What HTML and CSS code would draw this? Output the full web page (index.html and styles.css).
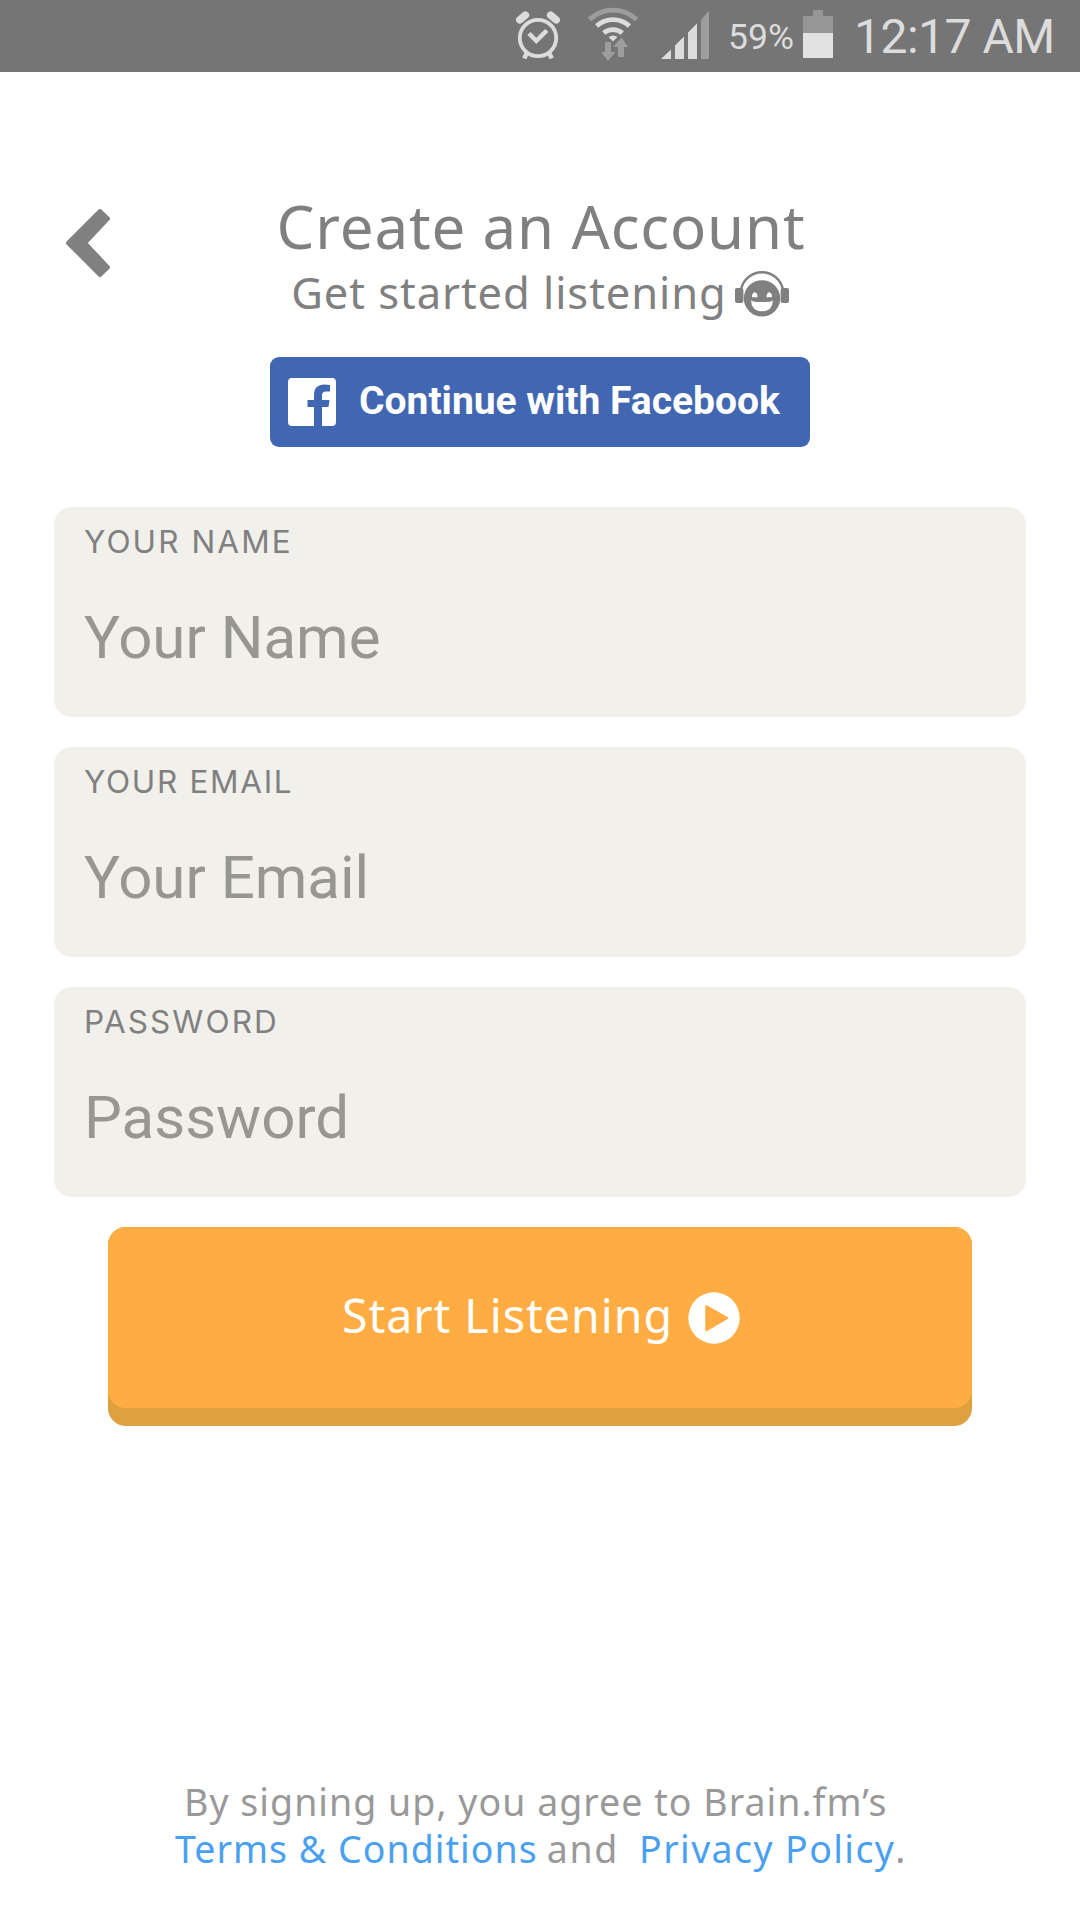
FILE: index.html
```html
<!DOCTYPE html>
<html lang="en">
<head>
<meta charset="utf-8">
<title>Create an Account</title>
<link rel="stylesheet" href="styles.css">
</head>
<body>
<div class="status">
  <svg class="alarm" viewBox="0 0 44 48" width="44" height="48" fill="none" stroke="#dcdcdc">
    <circle cx="22" cy="27" r="18.2" stroke-width="3.8"/>
    <path d="M13 22.500 20.300 29.800 30.800 19.500" stroke-width="4.500"/>
    <path d="M3.800 8.800 9.400 4.200M40.200 8.800 34.600 4.200" stroke-width="7.500" stroke-linecap="round"/>
    <path d="M10.500 42.500 8.300 47.500M33.500 42.500 35.700 47.500" stroke-width="4.500"/>
  </svg>
  <svg class="wifi" viewBox="0 0 50 56" width="50" height="56" fill="none" stroke="#dcdcdc" stroke-width="4.8">
    <path d="M1.500 12.500A34 34 0 0 1 48.500 12.500" stroke="#9d9d9d"/>
    <path d="M8.600 19A24.500 24.500 0 0 1 41.400 19"/>
    <path d="M15.700 26A14.500 14.500 0 0 1 34.300 26"/>
    <path d="M20.500 30A8 8 0 0 1 29.500 30L25 34.500Z" fill="#dcdcdc" stroke="none"/>
    <path d="M17 35h6v10h4.500L20 54l-7-9h4ZM30 50V40h-5l8.500-9.500L40 40h-4v10Z" fill="#9d9d9d" stroke="none"/>
  </svg>
  <svg class="signal" viewBox="0 0 48 48" width="48" height="48" fill="#dcdcdc">
    <path d="M0 48 10 38.500V48ZM14 34.500 23 25.500V48H14ZM27 21.500 36 12.500V48H27Z"/>
    <path d="M40 8.500 48 0V48H40Z" fill="#9d9d9d"/>
  </svg>
  <span class="percent">59%</span>
  <svg class="battery" viewBox="0 0 30 48" width="30" height="48">
    <path d="M10 0h10v6h10v42H0V6h10Z" fill="#969696"/>
    <path d="M0 23h30v25H0Z" fill="#e2e2e2"/>
  </svg>
  <span class="time">12:17 AM</span>
</div>

<header class="header">
  <svg class="back" viewBox="0 0 44 68" width="44" height="68">
    <path d="M34 2 42 9.700 19.200 34 42 58.300 34 66 2 34Z" fill="#808080" stroke="#808080" stroke-width="4" stroke-linejoin="round"/>
  </svg>
  <h1 class="title">Create an Account</h1>
  <p class="subtitle"><span>Get started listening</span>
    <svg class="face" viewBox="0 0 54 46" width="54" height="46">
      <path d="M6 19a21.300 21.300 0 0 1 42 0" fill="none" stroke="#808080" stroke-width="2.400"/>
      <rect x="0" y="17" width="8.400" height="15" rx="2" fill="#808080"/>
      <rect x="45.600" y="17" width="8.400" height="15" rx="2" fill="#808080"/>
      <circle cx="27" cy="27.400" r="18.200" fill="#808080"/>
      <path d="M17.500 26.500a2.600 3.400 0 1 1 4.500 0q-2.200-1-4.500 0ZM32 26.500a2.600 3.400 0 1 1 4.500 0q-2.200-1-4.500 0Z" fill="#fff"/>
      <path d="M16 29.500q3 1.500 7 1.500h8q4 0 7-1.500q-.5 10.700-11 10.700t-11-10.700Z" fill="#fff"/>
    </svg>
  </p>
</header>

<main class="main">
  <button class="facebook">
    <svg viewBox="0 0 48 48" width="48" height="48">
      <path d="M4 0H44a4 4 0 0 1 4 4V44a4 4 0 0 1-4 4H34V29h6.500l1-7H34V17.500c0-3 1.500-4 4-4h4V7q-2-.4-5.500-.4C30 6.600 26 10 26 17v5H19.500v7H26V48H4a4 4 0 0 1-4-4V4a4 4 0 0 1 4-4Z" fill="#fff"/>
    </svg>
    <span>Continue with Facebook</span>
  </button>
  <form class="form">
    <label class="field"><span class="label">YOUR NAME</span><input type="text" placeholder="Your Name"></label>
    <label class="field"><span class="label label-email">YOUR EMAIL</span><input type="text" placeholder="Your Email"></label>
    <label class="field"><span class="label">PASSWORD</span><input type="password" placeholder="Password"></label>
    <button class="start" type="button">
      <span class="start-face"><span>Start Listening</span>
        <svg viewBox="0 0 52 52" width="52" height="52">
          <circle cx="26" cy="26" r="25.700" fill="#fff"/>
          <path d="M18.500 14.500 39 26 18.500 38Z" fill="#ffad42" stroke="#ffad42" stroke-width="2.500" stroke-linejoin="round"/>
        </svg>
      </span>
    </button>
  </form>
</main>

<footer class="legal">
  <p class="line-one">By signing up, you agree to Brain.fm’s</p>
  <p class="line-two"><a>Terms &amp; Conditions</a><span class="and">and</span><a class="privacy">Privacy Policy</a><span>.</span></p>
</footer>
</body>
</html>
```
FILE: styles.css
```css
* { box-sizing: border-box; }
body {
  margin: 0;
  height: 1920px;
  display: flex;
  flex-direction: column;
  background: #fff;
  color: #808080;
  font-family: "Noto Sans", sans-serif;
}
h1, p { margin: 0; font-weight: 400; }
svg { display: block; flex: none; }
button { border: 0; padding: 0; margin: 0; }

.status {
  height: 72px;
  padding-left: 516px;
  display: flex;
  align-items: flex-start;
  background: #757575;
  color: #dcdcdc;
  font-family: Roboto, sans-serif;
  white-space: nowrap;
}
.alarm { margin-top: 11px; }
.wifi { margin: 7px 0 0 28px; }
.signal { margin: 11px 0 0 23px; }
.percent { width: 67px; margin-left: 19px; font-size: 35.5px; line-height: 75px; }
.battery { margin: 10px 0 0 8px; }
.time { margin-left: 21px; font-size: 48px; line-height: 73px; letter-spacing: -0.5px; }

.header {
  height: 285px;
  padding: 114px 54px 0;
  display: grid;
  grid-template-columns: 1fr auto 1fr;
  grid-template-rows: 80px 52px;
}
.back { grid-row: 1 / 3; margin: 23px 0 0 12px; }
.title {
  grid-column: 2;
  justify-self: center;
  padding-left: 2px;
  font-size: 60px;
  line-height: 80px;
  letter-spacing: 0.85px;
}
.subtitle {
  grid-column: 2;
  justify-self: center;
  display: flex;
  gap: 8px;
  font-size: 43.5px;
  line-height: 52px;
  letter-spacing: 0.95px;
}
.face { margin-top: 5px; }

.main { display: flex; flex-direction: column; align-items: center; }
.facebook {
  width: 540px;
  height: 90px;
  padding: 0 0 0 18px;
  display: flex;
  align-items: center;
  gap: 23px;
  border-radius: 9px;
  background: #4267b2;
  color: #fff;
  font: 700 39px/88px Roboto, sans-serif;
  white-space: nowrap;
}
.facebook span { height: 90px; }
.form {
  width: 972px;
  margin-top: 60px;
  display: flex;
  flex-direction: column;
  gap: 30px;
}
.field {
  height: 210px;
  padding: 15px 30px 0;
  display: flex;
  flex-direction: column;
  gap: 31px;
  border-radius: 18px;
  background: #f1f0eb;
}
.label { font: 400 31.5px/40px Inter, sans-serif; letter-spacing: 2.1px; }
.label-email { letter-spacing: 1.7px; }
.field input {
  width: 100%;
  height: 90px;
  padding: 0;
  border: 0;
  outline: 0;
  background: transparent;
  font: 400 60px/90px Roboto, sans-serif;
}
.field input::placeholder { color: #979691; opacity: 1; }
.start {
  height: 199px;
  margin: 0 54px;
  border-radius: 18px;
  background: #dda13f;
  display: flex;
  align-items: flex-start;
}
.start-face {
  width: 100%;
  height: 181px;
  border-radius: 18px;
  background: #ffad42;
  color: #fff;
  display: flex;
  justify-content: center;
  gap: 15px;
  padding: 58px 0 0 2px;
  font: 400 46.5px/60px "Noto Sans", sans-serif;
  letter-spacing: 1px;
}
.start-face svg { margin-top: 7px; }

.legal {
  margin-top: auto;
  height: 141px;
  font-size: 37.5px;
  line-height: 46.5px;
  letter-spacing: 1.03px;
  color: #999;
  white-space: nowrap;
}
.line-one { padding-left: 184px; }
.line-two { padding-left: 175px; display: flex; }
.line-two a { color: #4aa0f0; }
.and { margin: 0 20px 0 9px; letter-spacing: 1.7px; }
.line-two .privacy { letter-spacing: 1.4px; }
```
